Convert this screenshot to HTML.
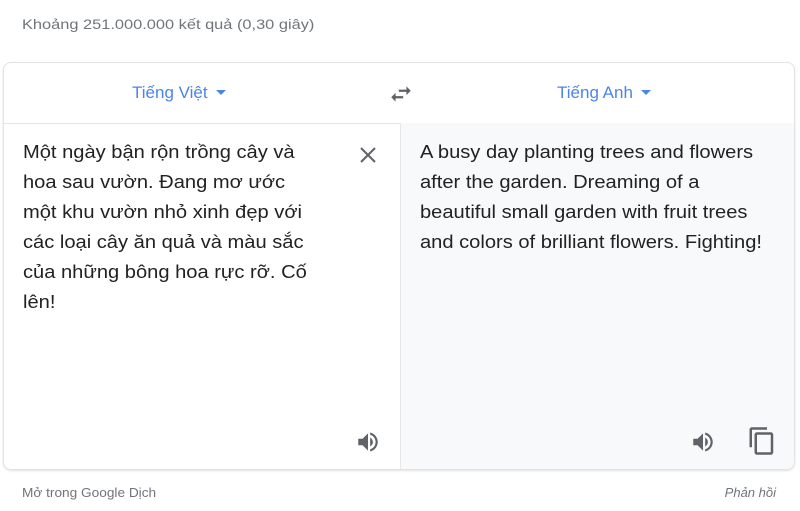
<!DOCTYPE html>
<html><head><meta charset="utf-8"><style>
body{margin:0;width:800px;height:511px;background:#fff;font-family:"Liberation Sans",Arial,sans-serif;position:relative;overflow:hidden}
.a{position:absolute}
.card{left:3px;top:62px;width:792px;height:408px;border:1px solid #e3e3e3;border-radius:8px;box-shadow:0 1px 2px rgba(0,0,0,.12);overflow:hidden;box-sizing:border-box}
.hdr{left:0;top:0;width:100%;height:60px;border-bottom:1px solid #e6e6e6}
.lang{color:#4a86e8;font-size:17px;top:20px}
.tri{display:inline-block;width:0;height:0;border-left:5px solid transparent;border-right:5px solid transparent;border-top:5px solid #4a86e8;margin-left:8px;vertical-align:3px}
.rp{left:396px;top:60px;right:0;bottom:0;background:#f8f9fa;border-left:1px solid #e6e6e6}
.txt{font-size:18px;line-height:30px;color:#222;transform:scaleX(1.117);transform-origin:0 0}
</style></head><body>
<div class="a" style="left:22px;top:16px;font-size:14px;color:#70757a;transform:scaleX(1.17);transform-origin:0 0">Khoảng 251.000.000 kết quả (0,30 giây)</div>
<div class="a card">
 <div class="a hdr"></div>
 <div class="a lang" style="left:128px">Tiếng Việt<span class="tri"></span></div>
 <div class="a lang" style="left:553px">Tiếng Anh<span class="tri"></span></div>
 <svg class="a" style="left:384px;top:18px" width="26" height="26" viewBox="0 0 24 24"><path fill="#5f6368" d="M6.99 11L3 15l3.99 4v-3H14v-2H6.99v-3zM21 9l-3.99-4v3H10v2h7.01v3L21 9z"/></svg>
 <div class="a rp"></div>
 <div class="a txt" style="left:19px;top:74px;width:255px">Một ngày bận rộn trồng cây và hoa sau vườn. Đang mơ ước một khu vườn nhỏ xinh đẹp với các loại cây ăn quả và màu sắc của những bông hoa rực rỡ. Cố lên!</div>
 <svg class="a" style="left:352px;top:80px" width="24" height="24" viewBox="0 0 24 24"><path stroke="#5f6368" stroke-width="2" d="M5 5L19 19M19 5L5 19"/></svg>
 <div class="a txt" style="left:416px;top:74px;width:310px">A busy day planting trees and flowers after the garden. Dreaming of a beautiful small garden with fruit trees and colors of brilliant flowers. Fighting!</div>
 <svg class="a" style="left:351px;top:366px" width="26" height="26" viewBox="0 0 24 24"><path fill="#5f6368" d="M3 9v6h4l5 5V4L7 9H3zm13.5 3c0-1.77-1.02-3.29-2.5-4.03v8.05c1.480-.73 2.5-2.25 2.5-4.02zM14 3.23v2.06c2.89.86 5 3.54 5 6.71s-2.11 5.85-5 6.71v2.06c4.01-.91 7-4.490 7-8.77s-2.99-7.86-7-8.77z"/></svg>
 <svg class="a" style="left:686px;top:366px" width="26" height="26" viewBox="0 0 24 24"><path fill="#5f6368" d="M3 9v6h4l5 5V4L7 9H3zm13.5 3c0-1.77-1.02-3.29-2.5-4.03v8.05c1.48-.73 2.5-2.25 2.5-4.02zM14 3.23v2.06c2.89.86 5 3.54 5 6.71s-2.11 5.85-5 6.71v2.06c4.01-.91 7-4.49 7-8.77s-2.99-7.86-7-8.77z"/></svg>
 <svg class="a" style="left:743px;top:363px" width="30" height="30" viewBox="0 0 24 24"><path fill="#5f6368" d="M16 1H4c-1.1 0-2 .9-2 2v14h2V3h12V1zm3 4H8c-1.1 0-2 .9-2 2v14c0 1.1.9 2 2 2h11c1.1 0 2-.9 2-2V7c0-1.1-.9-2-2-2zm0 16H8V7h11v14z"/></svg>
</div>
<div class="a" style="left:22px;top:485px;font-size:13px;color:#70757a;transform:scaleX(1.05);transform-origin:0 0">Mở trong Google Dịch</div>
<div class="a" style="right:24px;top:485px;font-size:13px;color:#70757a;font-style:italic">Phản hồi</div>
</body></html>
